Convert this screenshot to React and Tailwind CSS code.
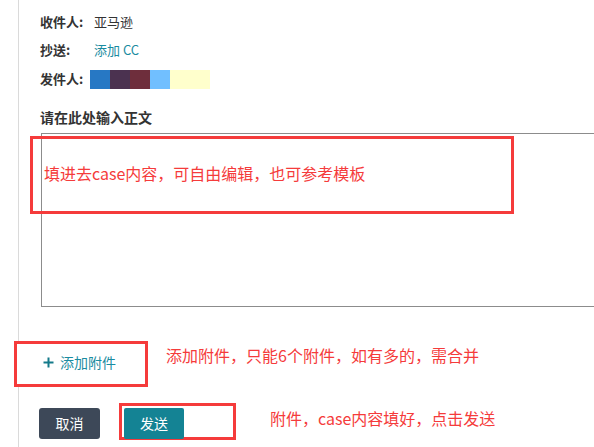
export default function App() {
  const font = "font-['Noto_Sans_CJK_SC','Noto_Sans',sans-serif]";
  return (
    <div className={`relative w-[594px] h-[447px] overflow-hidden bg-white ${font}`}>
      <div className="ml-[18px] h-full border-l border-[#dadada] pl-[21px] pt-[8px]">
        <div className="flex h-[28px] items-center text-[13px]">
          <span className="w-[54px] font-bold text-[#333]">收件人:</span>
          <span className="text-[#333]">亚马逊</span>
        </div>
        <div className="flex h-[28px] items-center text-[13px]">
          <span className="w-[54px] font-bold text-[#333]">抄送:</span>
          <span className="text-[#1a8ba0]">添加 CC</span>
        </div>
        <div className="mt-[1px] flex h-[28px] items-center text-[13px]">
          <span className="w-[50px] font-bold text-[#333]">发件人:</span>
          <div className="flex h-[19px]">
            <div className="w-[20px] bg-[#2778c4]" />
            <div className="w-[20px] bg-[#4b3250]" />
            <div className="w-[20px] bg-[#6e2e3c]" />
            <div className="w-[20px] bg-[#71bfff]" />
            <div className="w-[40px] bg-[#ffffcc]" />
          </div>
        </div>
        <div className="mt-[14px] flex h-[20px] items-center text-[14px] font-bold text-[#333]">
          请在此处输入正文
        </div>
        <div className="ml-[1px] mt-[6px] h-[174px] w-[600px] border border-[#8c8c8c]" />
        <div className="relative z-10 mt-[45px] flex h-[20px] items-center gap-[6px] pl-[3px] text-[14px] text-[#1a8ba0]">
          <svg width="11" height="11" viewBox="0 0 11 11" className="shrink-0">
            <path d="M5.5 0.5v10M0.5 5.5h10" stroke="#147a8a" strokeWidth="2" />
          </svg>
          <span>添加附件</span>
        </div>
        <div className="-ml-[1px] mt-[36px] flex gap-[24px]">
          <button className="h-[31px] w-[61px] rounded-[3px] bg-[#3d4858] text-[14px] text-white">取消</button>
          <button className="relative z-10 h-[31px] w-[60px] rounded-[2px] bg-[#148394] text-[14px] text-white">发送</button>
        </div>
      </div>

      {/* annotations */}
      <div className="absolute left-[30px] top-[136px] h-[78px] w-[484px] border-[3px] border-[#f53b3b]" />
      <div className="absolute left-[44px] top-[162px] text-[16px] leading-[22px] text-[#f53b3b]">
        填进去case内容，可自由编辑，也可参考模板
      </div>
      <div className="absolute left-[14px] top-[341px] h-[46px] w-[134px] border-[3px] border-[#f53b3b] bg-white" />
      <div className="absolute left-[166px] top-[344px] text-[16px] leading-[22px] text-[#f53b3b]">
        添加附件，只能6个附件，如有多的，需合并
      </div>
      <div className="absolute left-[119px] top-[403px] h-[37px] w-[117px] border-[3px] border-[#f53b3b]" />
      <div className="absolute left-[270px] top-[407px] text-[16px] leading-[22px] text-[#f53b3b]">
        附件，case内容填好，点击发送
      </div>
    </div>
  );
}
